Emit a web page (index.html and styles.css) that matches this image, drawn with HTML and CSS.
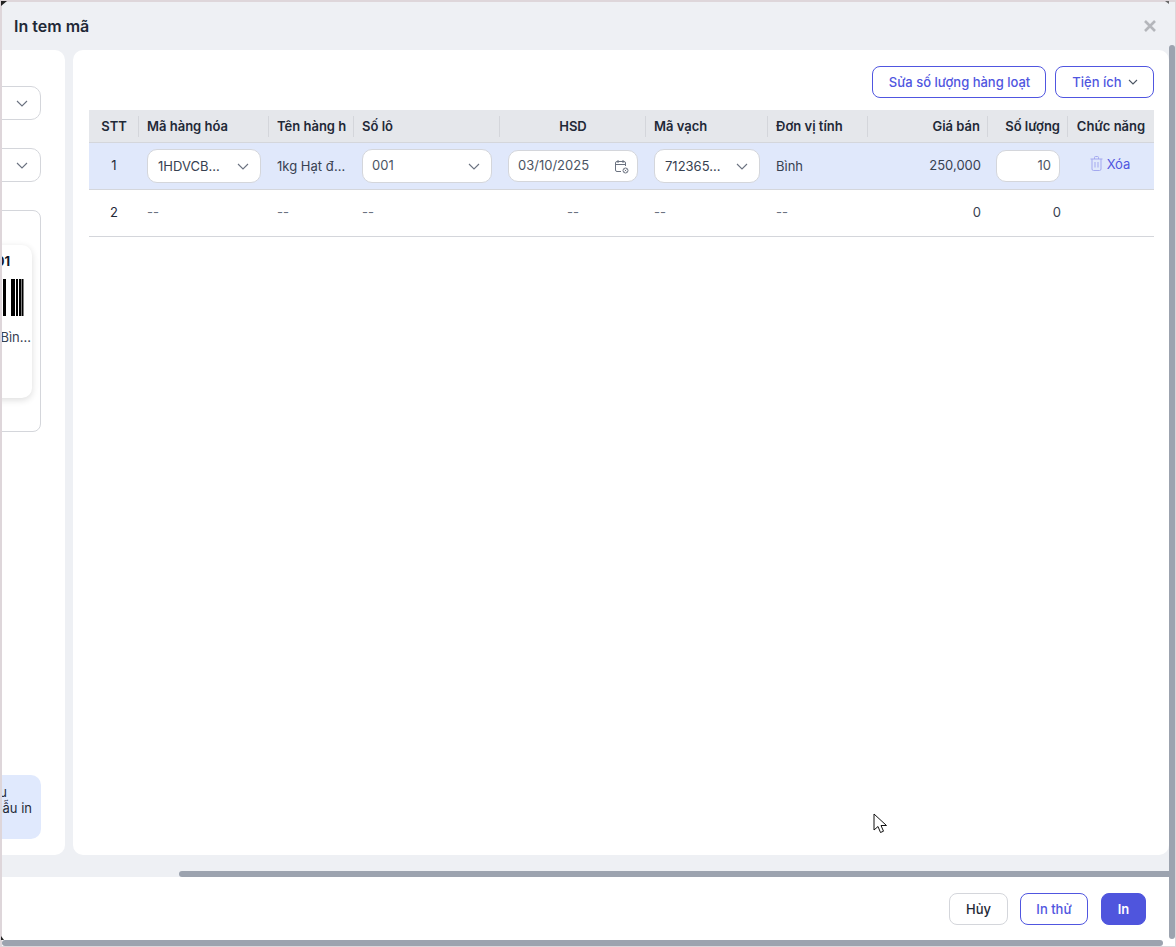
FILE: index.html
```html
<!DOCTYPE html>
<html lang="vi">
<head>
<meta charset="utf-8">
<title>In tem mã</title>
<link rel="stylesheet" href="styles.css">
</head>
<body>
<div class="screen">
  <div class="modal">
    <header class="modal-header">
      <h1 class="modal-title">In tem mã</h1>
      <svg class="close-icon" width="12" height="12" viewBox="0 0 12 12"><path d="M1 1l10 10M11 1L1 11"/></svg>
    </header>
    <div class="modal-body">
      <aside class="side">
        <div class="side-field field-first"><svg class="chev" width="12" height="7" viewBox="0 0 12 7"><path d="M1 1l5 5 5-5"/></svg></div>
        <div class="side-field field-second"><svg class="chev" width="12" height="7" viewBox="0 0 12 7"><path d="M1 1l5 5 5-5"/></svg></div>
        <div class="preview">
          <div class="label-card">
            <div class="label-code">0001</div>
            <svg class="barcode" width="25" height="37" viewBox="0 0 25 37"><path d="M4 0h3v37H4zM12 0h4v37h-4zM17 0h2v37h-2zM20 0h2.500v37H20zM23 0h1.500v37H23z"/></svg>
            <div class="label-name">Bìn...</div>
          </div>
        </div>
        <div class="info">
          <div class="info-line line-a">Dữ liệu</div>
          <div class="info-line line-b">mẫu in</div>
        </div>
      </aside>
      <main class="main">
        <div class="toolbar">
          <button class="btn btn-outline btn-bulk">Sửa số lượng hàng loạt</button>
          <button class="btn btn-outline btn-util">Tiện ích
            <svg class="chev chev-small" width="10" height="6" viewBox="0 0 10 6"><path d="M1 1l4 4 4-4"/></svg>
          </button>
        </div>
        <table class="grid">
          <colgroup>
            <col class="c-stt"><col class="c-code"><col class="c-name"><col class="c-lot"><col class="c-date"><col class="c-bar"><col class="c-unit"><col class="c-price"><col class="c-qty"><col class="c-act">
          </colgroup>
          <thead>
            <tr>
              <th><div class="th center">STT</div></th>
              <th><div class="th">Mã hàng hóa</div></th>
              <th><div class="th"><span class="clip">Tên hàng hóa</span></div></th>
              <th><div class="th">Số lô</div></th>
              <th><div class="th center">HSD</div></th>
              <th><div class="th">Mã vạch</div></th>
              <th><div class="th">Đơn vị tính</div></th>
              <th><div class="th right">Giá bán</div></th>
              <th><div class="th right">Số lượng</div></th>
              <th><div class="th center last">Chức năng</div></th>
            </tr>
          </thead>
          <tbody>
            <tr class="row-active">
              <td class="center num-strong up">1</td>
              <td><div class="select"><span class="select-text">1HDVCB...</span><svg class="chev" width="12" height="7" viewBox="0 0 12 7"><path d="M1 1l5 5 5-5"/></svg></div></td>
              <td><div class="ellipsis">1kg Hạt điều rang</div></td>
              <td><div class="select"><span class="select-text lot">001</span><svg class="chev" width="12" height="7" viewBox="0 0 12 7"><path d="M1 1l5 5 5-5"/></svg></div></td>
              <td><div class="date"><span class="date-text">03/10/2025</span>
                <svg class="cal" width="15" height="15" viewBox="0 0 15 15"><path d="M7 12.5H3a1.5 1.5 0 0 1-1.500-1.500V4A1.500 1.500 0 0 1 3 2.500h7A1.500 1.500 0 0 1 11.500 4v3M1.500 5.500h10M4 1v3M9 1v3"/><circle cx="11.500" cy="11.500" r="2.500"/><path d="M10.700 10.700l1.600 1.600M12.300 10.700l-1.600 1.600"/></svg></div></td>
              <td><div class="select"><span class="select-text">712365...</span><svg class="chev" width="12" height="7" viewBox="0 0 12 7"><path d="M1 1l5 5 5-5"/></svg></div></td>
              <td>Bình</td>
              <td class="right up">250,000</td>
              <td><div class="qty">10</div></td>
              <td class="center up"><span class="del">
                <svg class="trash" width="13" height="15" viewBox="0 0 13 15"><path d="M.5 3h12M4.500 3V1.500a1 1 0 0 1 1-1h2a1 1 0 0 1 1 1V3M2 3v10a1.500 1.500 0 0 0 1.500 1.500h6A1.500 1.500 0 0 0 11 13V3M5 6v5.500M8 6v5.500"/></svg>Xóa</span></td>
            </tr>
            <tr class="row-plain">
              <td class="center num-strong">2</td>
              <td class="muted">--</td>
              <td class="muted">--</td>
              <td class="muted">--</td>
              <td class="muted center">--</td>
              <td class="muted">--</td>
              <td class="muted">--</td>
              <td class="right">0</td>
              <td class="right">0</td>
              <td></td>
            </tr>
          </tbody>
        </table>
      </main>
    </div>
    <footer class="modal-footer">
      <button class="btn btn-cancel">Hủy</button>
      <button class="btn btn-outline btn-test">In thử</button>
      <button class="btn btn-primary">In</button>
    </footer>
    <div class="scroll-h-outer"></div>
    <div class="scroll-h-inner"></div>
    <div class="scroll-v"></div>
    <svg class="cursor" width="15" height="21" viewBox="0 0 15 21"><path d="M1 1v16l4-3.500 2.500 6 3-1.300-2.500-5.700h5.500z"/></svg>
  </div>
  <span class="corner corner-tl"></span>
  <span class="corner corner-tr"></span>
  <span class="corner corner-bl"></span>
</div>
</body>
</html>
```

FILE: styles.css
```css
* { box-sizing: border-box; }
html, body { margin: 0; padding: 0; }
body {
  background: #ded6da;
  font-family: Inter, "Noto Sans", sans-serif;
  font-size: 13px;
  color: #374151;
  overflow: hidden;
}
.screen {
  position: relative;
  width: 1176px;
  height: 947px;
  padding: 2px 1px 1px 2px;
}
.corner {
  position: absolute;
  background: #222;
}
.corner-tl {
  left: 1px;
  top: 1px;
  width: 6px;
  height: 5px;
  clip-path: polygon(0 0, 100% 0, 0 100%);
}
.corner-tr {
  left: 1165px;
  top: 1px;
  width: 4px;
  height: 3px;
  background: #666;
  clip-path: polygon(0 0, 100% 0, 100% 100%);
}
.corner-bl {
  left: 1px;
  top: 936px;
  width: 3px;
  height: 4px;
  clip-path: polygon(0 0, 100% 100%, 0 100%);
}
.modal {
  position: relative;
  width: 1173px;
  height: 944px;
  background: #fff;
  display: flex;
  flex-direction: column;
  overflow: hidden;
}
.modal-header {
  height: 48px;
  flex: none;
  background: #eef0f4;
  display: flex;
  align-items: center;
  justify-content: space-between;
  padding: 0 19px 0 12px;
}
.modal-title {
  margin: 0;
  font-size: 16px;
  font-weight: 600;
  color: #1f2937;
}
.close-icon path { fill: none; stroke: #b4b6bb; stroke-width: 2.6; }
.modal-body {
  height: 827px;
  flex: none;
  background: #eef0f4;
  display: flex;
  gap: 8px;
  padding: 0 6px 22px 0;
}
.side {
  width: 63px;
  flex: none;
  background: #fff;
  border-radius: 0 10px 10px 0;
  overflow: hidden;
  display: flex;
  flex-direction: column;
  align-items: flex-end;
  padding: 36px 24px 16px 0;
}
.side-field {
  flex: none;
  width: 120px;
  height: 34px;
  border: 1px solid #d4d6db;
  border-radius: 10px;
  display: flex;
  align-items: center;
  justify-content: flex-end;
  padding-right: 12px;
}
.field-second { margin-top: 28px; }
.preview {
  flex: none;
  margin-top: 28px;
  width: 200px;
  height: 222px;
  border: 1px solid #d4d6db;
  border-radius: 8px;
  padding: 34px 7px 0 0;
  display: flex;
  justify-content: flex-end;
  align-items: flex-start;
}
.label-card {
  width: 180px;
  height: 153px;
  margin-right: 1px;
  background: #fff;
  border-radius: 10px;
  box-shadow: 0 2px 7px rgba(0, 0, 0, .14);
  display: flex;
  flex-direction: column;
  align-items: flex-end;
  padding-top: 8px;
}
.label-code {
  font-size: 13px;
  font-weight: 700;
  line-height: 16px;
  color: #111827;
  margin-right: 22px;
}
.barcode { margin: 10px 8px 0 0; }
.barcode path { fill: #000; }
.label-name {
  margin: 13px 1px 0 0;
  line-height: 16px;
  color: #374151;
}
.info {
  flex: none;
  margin-top: auto;
  width: 200px;
  height: 64px;
  background: #e0e9fd;
  border-radius: 10px;
  padding-top: 9px;
  color: #1f2937;
  line-height: 16px;
  text-align: right;
}
.line-a { padding-right: 34px; }
.line-b { padding-right: 9px; }
.main {
  flex: 1;
  background: #fff;
  border-radius: 10px;
  padding: 16px 15px 0 16px;
  min-width: 0;
}
.toolbar {
  display: flex;
  justify-content: flex-end;
  gap: 9px;
  height: 32px;
  margin-bottom: 12px;
}
.btn {
  font-family: inherit;
  font-size: 13px;
  font-weight: 500;
  height: 32px;
  border-radius: 8px;
  padding: 0;
  background: #fff;
  display: inline-flex;
  align-items: center;
  justify-content: center;
  gap: 7px;
}
.btn-outline { border: 1px solid #5056e0; color: #5056e0; }
.btn-bulk { width: 174px; padding-left: 1px; }
.btn-util { width: 99px; padding-left: 1px; gap: 6px; }
.btn-test { width: 68px; }
.btn-cancel { width: 59px; border: 1px solid #d4d6db; color: #1f2937; }
.btn-primary { width: 45px; margin-left: 1px; border: 1px solid #4f55dd; background: #4f55dd; color: #fff; font-weight: 600; }
.chev { flex: none; }
.chev path { fill: none; stroke: #6b7280; stroke-width: 1.1; }
.chev-small path { stroke: #4b5563; }
.grid {
  width: 1065px;
  table-layout: fixed;
  border-collapse: separate;
  border-spacing: 0;
}
.c-stt { width: 50px; }
.c-code { width: 130px; }
.c-name { width: 85px; }
.c-lot { width: 146px; }
.c-date { width: 146px; }
.c-bar { width: 122px; }
.c-unit { width: 100px; }
.c-price { width: 120px; }
.c-qty { width: 80px; }
.c-act { width: 86px; }
th {
  height: 33px;
  padding: 0;
  background: #e5e7eb;
  border-bottom: 1px solid #d4d6db;
  font-weight: 600;
  text-align: left;
}
.th {
  height: 21px;
  line-height: 21px;
  padding: 0 7px 0 8px;
  border-right: 1px solid #d4d6db;
  white-space: nowrap;
  overflow: hidden;
  color: #1f2937;
}
.th.last { border-right: 0; padding: 0; }
.clip { display: block; width: 69px; overflow: hidden; }
td {
  height: 47px;
  padding: 0 8px;
  border-bottom: 1px solid #d4d6db;
  color: #374151;
}
td.right { padding-right: 7px; }
td.up { padding-bottom: 2px; }
.row-plain td { padding-bottom: 2px; }
.row-active td { background: #e0e8fb; }
.center { text-align: center; }
.right { text-align: right; }
.muted { color: #6b7280; }
.num-strong { color: #1f2937; }
.ellipsis { white-space: nowrap; overflow: hidden; text-overflow: ellipsis; }
.select {
  height: 34px;
  background: #fff;
  border: 1px solid #d4d6db;
  border-radius: 10px;
  display: flex;
  align-items: center;
  justify-content: space-between;
  padding: 0 11px 0 10px;
}
.select-text.lot { margin: 0 0 2px -1px; color: #4b5563; }
.date {
  height: 32px;
  background: #fff;
  border: 1px solid #d4d6db;
  border-radius: 10px;
  display: flex;
  align-items: center;
  justify-content: space-between;
  padding: 0 8px 0 9px;
  color: #4b5563;
}
.date-text { margin-bottom: 2px; }
.cal path, .cal circle { fill: none; stroke: #6b7280; stroke-width: 1; }
.qty {
  height: 32px;
  line-height: 28px;
  background: #fff;
  border: 1px solid #d4d6db;
  border-radius: 10px;
  padding-right: 8px;
  text-align: right;
  color: #4b5563;
}
.del {
  display: inline-flex;
  align-items: center;
  gap: 4px;
  margin-right: 2px;
  color: #5056e0;
  font-weight: 400;
}
.trash path { fill: none; stroke: #a3a8ef; stroke-width: 1; }
.modal-footer {
  height: 63px;
  flex: none;
  background: #fff;
  display: flex;
  align-items: center;
  justify-content: flex-end;
  gap: 12px;
  padding: 1px 29px 0 0;
}
.scroll-h-outer {
  position: absolute;
  left: 0;
  top: 938px;
  width: 1161px;
  height: 6px;
  background: #9ca3af;
  border-radius: 3px;
}
.scroll-h-inner {
  position: absolute;
  left: 177px;
  top: 869px;
  width: 990px;
  height: 6px;
  background: #9ca3af;
  border-radius: 3px 0 0 3px;
}
.scroll-v {
  position: absolute;
  left: 1167px;
  top: 43px;
  width: 6px;
  height: 894px;
  background: #9ca3af;
  border-radius: 3px;
}
.cursor {
  position: absolute;
  left: 871px;
  top: 811px;
}
.cursor path { fill: #fff; stroke: #111; stroke-width: 1; }
```
